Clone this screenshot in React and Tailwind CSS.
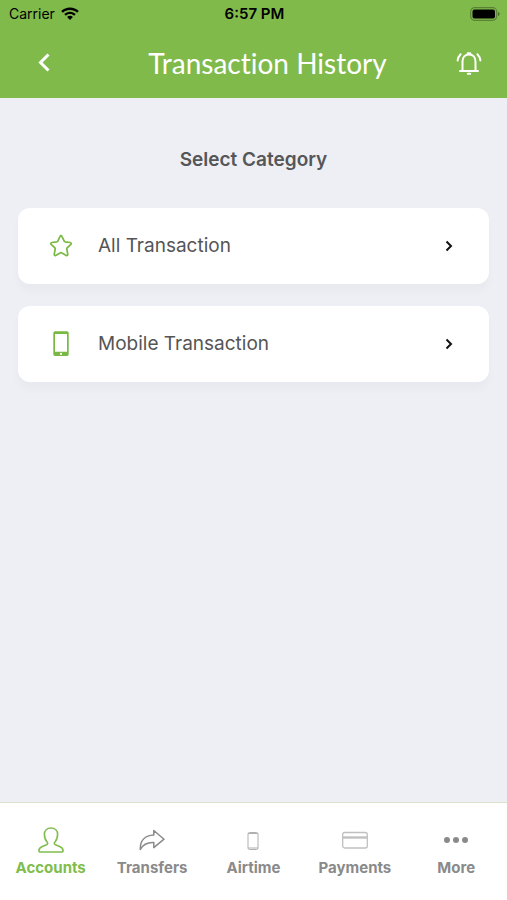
function WifiIcon() {
  return (
    <svg className="w-[18px] h-[14px]" viewBox="0 0 18 14" fill="currentColor" aria-hidden="true">
      <path d="M9 0.5C5.6 0.5 2.5 1.8 0.2 4L1.9 5.8C3.7 4 6.2 3 9 3s5.3 1 7.1 2.8L17.8 4C15.5 1.8 12.4.5 9 .5Z" />
      <path d="M9 4.7c-2.3 0-4.3.9-5.8 2.4l1.7 1.7C6 7.8 7.4 7.1 9 7.1s3 .7 4.1 1.7l1.7-1.7C13.300 5.600 11.300 4.700 9 4.700Z" />
      <path d="M9 8.800c-1.100 0-2.100.4-2.900 1.200L9 13l2.900-3C11.100 9.200 10.100 8.800 9 8.800Z" />
    </svg>
  )
}

function BatteryIcon() {
  return (
    <svg className="w-[30px] h-[14px]" viewBox="0 0 30 14" aria-hidden="true">
      <rect x="0.7" y="0.7" width="26" height="12.600" rx="4" fill="none" stroke="#000" strokeOpacity="0.3" strokeWidth="1.200" />
      <rect x="2.500" y="2.500" width="22.500" height="9" rx="2" fill="#000" />
      <path d="M28 5c1 .4 1.600 1.100 1.600 2S29 8.600 28 9Z" fillOpacity="0.4" />
    </svg>
  )
}

function BellIcon() {
  return (
    <svg className="w-7 h-7" viewBox="0 0 28 28" fill="none" stroke="currentColor" strokeWidth="2" strokeLinecap="round" strokeLinejoin="round" aria-hidden="true">
      <path d="M7.500 21.500V12.500c0-4 2.600-7 6.500-7s6.500 3 6.500 7v9" />
      <path d="M5 22h18" />
      <path d="M13 4.600h2" strokeWidth="2.600" />
      <path d="M12.800 24.700h2.400" strokeWidth="2" />
      <path d="M5.600 5.200C4 6.800 3 8.800 2.600 11.500M22.400 5.200c1.600 1.600 2.600 3.600 3 6.300" />
    </svg>
  )
}

function StarIcon() {
  return (
    <svg className="w-6 h-6" viewBox="0 0 24 24" fill="none" stroke="currentColor" strokeWidth="1.700" strokeLinejoin="round" aria-hidden="true">
      <path d="M11.100 2.300c.4-.9 1.400-.9 1.800 0l2.300 4.800c.2.400.5.600.9.700l5.200.7c.9.100 1.200 1.200.6 1.800l-3.800 3.600c-.3.300-.4.700-.3 1.100l1 5.300c.1.900-.8 1.500-1.500 1.100l-4.800-2.600a1 1 0 0 0-1 0l-4.800 2.600c-.7.400-1.600-.2-1.500-1.100l1-5.300c.1-.4 0-.8-.3-1.100l-3.800-3.600c-.6-.6-.3-1.700.6-1.800l5.200-.7c.4-.1.700-.3.900-.7Z" />
    </svg>
  )
}

function MobileIcon() {
  return (
    <svg className="w-4 h-[26px]" viewBox="0 0 16 26" fill="currentColor" aria-hidden="true">
      <path fillRule="evenodd" d="M2 .3h12A1.700 1.700 0 0 1 15.700 2v21.300a1.700 1.700 0 0 1-1.700 1.700H2A1.700 1.700 0 0 1 .3 23.300V2A1.700 1.700 0 0 1 2 .3ZM2 3v17.700h12V3ZM8 21.800a1.100 1.100 0 1 0 0 2.200 1.100 1.100 0 0 0 0-2.200Z" />
    </svg>
  )
}

function PersonIcon() {
  return (
    <svg className="w-[26px] h-[26px]" viewBox="0 0 26 26" fill="none" stroke="currentColor" strokeWidth="1.600" strokeLinejoin="round" aria-hidden="true">
      <path d="M13 1C9 1 6.400 3.500 6.400 7.300c0 3.200.9 5.900 2.800 7.900.9 1 .5 2-.6 2.500L4.300 19.400C2 20.300.9 21.600.9 24c0 .6.400 1 1 1h22.200c.6 0 1-.4 1-1 0-2.400-1.100-3.700-3.400-4.600l-4.300-1.700c-1.100-.5-1.500-1.500-.6-2.500 1.900-2 2.800-4.700 2.800-7.900C19.600 3.500 17 1 13 1Z" />
    </svg>
  )
}

function ShareIcon() {
  return (
    <svg className="w-[26px] h-[26px]" viewBox="0 0 26 26" fill="none" stroke="currentColor" strokeWidth="1.500" strokeLinejoin="round" aria-hidden="true">
      <path d="M14.800 3.500 25 12.200l-10.200 8.400v-5.100C8.600 15.200 4.200 17 1.300 22.500.9 13.700 6.100 8.500 14.800 8Z" />
    </svg>
  )
}

function PhoneOutlineIcon() {
  return (
    <svg className="w-3 h-[26px] text-[#b0b0b0]" viewBox="0 0 12 26" fill="none" stroke="currentColor" aria-hidden="true">
      <rect x="1" y="5.500" width="10" height="17" rx="1.500" />
      <path d="M1 6.500h10M1 21h10" />
    </svg>
  )
}

function CardIcon() {
  return (
    <svg className="w-[26px] h-[26px] text-[#c0c0c0]" viewBox="0 0 26 26" fill="none" stroke="currentColor" aria-hidden="true">
      <rect x="0.7" y="5.500" width="24.600" height="15.500" rx="2" strokeWidth="1.300" />
      <path d="M1 10.500h24" strokeWidth="2.400" />
    </svg>
  )
}

function DotsIcon() {
  return (
    <svg className="w-[26px] h-[26px]" viewBox="0 0 26 26" fill="currentColor" aria-hidden="true">
      <circle cx="4" cy="13" r="3" />
      <circle cx="13" cy="13" r="3" />
      <circle cx="22" cy="13" r="3" />
    </svg>
  )
}

const categories = [
  { icon: StarIcon, title: 'All Transaction' },
  { icon: MobileIcon, title: 'Mobile Transaction' },
]

const tabs = [
  { icon: PersonIcon, label: 'Accounts', active: true },
  { icon: ShareIcon, label: 'Transfers' },
  { icon: PhoneOutlineIcon, label: 'Airtime' },
  { icon: CardIcon, label: 'Payments' },
  { icon: DotsIcon, label: 'More' },
]

export default function App() {
  return (
    <div className="min-h-screen flex flex-col bg-[#eeeff4] font-['Inter',sans-serif]">
      {/* Header */}
      <header className="bg-[#80ba4b]">
        <div className="grid grid-cols-3 items-center h-7 pl-[9px] pr-[7px] text-black">
          <div className="flex items-center gap-1.5">
            <span className="text-sm">Carrier</span>
            <WifiIcon />
          </div>
          <span className="text-center text-[15px] font-semibold">6:57 PM</span>
          <div className="flex justify-end">
            <BatteryIcon />
          </div>
        </div>
        <div className="flex items-center h-[70px] pl-7 pr-6 text-white">
          <button type="button" aria-label="Back" className="flex items-center justify-center w-8 h-8">
            <svg className="w-3 h-5" viewBox="0 0 12 20" fill="none" stroke="currentColor" strokeWidth="3" aria-hidden="true">
              <path d="M10.500 1.500 2.500 9.500l8 8" />
            </svg>
          </button>
          <h1 className="flex-1 pl-5 text-center text-[28px] leading-8 font-['Lato',sans-serif] [font-variant-ligatures:none]">
            Transaction History
          </h1>
          <button type="button" aria-label="Notifications" className="flex items-center justify-center w-7 h-8">
            <BellIcon />
          </button>
        </div>
      </header>

      {/* Categories */}
      <main className="flex-1 px-[18px] pt-12">
        <h2 className="text-center text-[19px] leading-7 font-semibold text-[#555658]">Select Category</h2>
        <ul className="mt-[34px] flex flex-col gap-[22px]">
          {categories.map(({ icon: Icon, title }) => (
            <li key={title}>
              <button
                type="button"
                className="flex items-center w-full h-[76px] pl-[30px] pr-9 rounded-xl bg-white text-left text-[19px] text-[#555555] shadow-[0_8px_8px_rgba(0,0,0,0.025)]"
              >
                <span className="flex justify-center w-[26px] mr-6 text-[#78b843]">
                  <Icon />
                </span>
                <span className="flex-1">{title}</span>
                <svg className="w-2 h-3" viewBox="0 0 8 12" fill="none" stroke="#111" strokeWidth="2" aria-hidden="true">
                  <path d="M1.500 1.500 6 6l-4.500 4.500" />
                </svg>
              </button>
            </li>
          ))}
        </ul>
      </main>

      {/* Bottom tabs */}
      <nav className="grid grid-cols-5 h-[98px] pt-6 bg-white border-t border-[#dce3cd]">
        {tabs.map(({ icon: Icon, label, active }) => (
          <a
            key={label}
            href="#"
            aria-current={active ? 'page' : undefined}
            className={`flex flex-col items-center gap-1 text-[15px] leading-[22px] font-bold ${active ? 'text-[#80bd4d]' : 'text-[#8a8a8a]'}`}
          >
            <Icon />
            <span>{label}</span>
          </a>
        ))}
      </nav>
    </div>
  )
}
